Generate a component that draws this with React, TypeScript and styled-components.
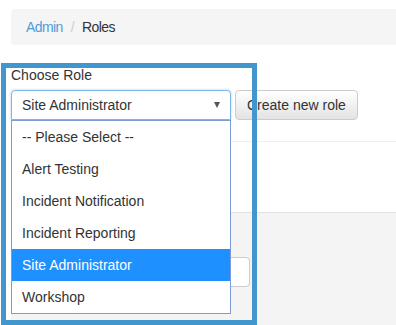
import React from 'react';
import styled, { createGlobalStyle } from 'styled-components';

const GlobalStyle = createGlobalStyle`
  html, body {
    margin: 0;
    padding: 0;
    background: #ffffff;
  }
  body {
    font-family: "Liberation Sans", Arial, Helvetica, sans-serif;
    font-size: 14px;
    line-height: 20px;
    color: #333333;
  }
`;

const Page = styled.div`
  position: relative;
  width: 396px;
  height: 325px;
  overflow: hidden;
  padding: 9px 0 0 11px;
  box-sizing: border-box;
`;

const Breadcrumb = styled.ol`
  display: flex;
  align-items: center;
  list-style: none;
  margin: 0 0 20px 0;
  padding: 8px 15px;
  height: 36px;
  box-sizing: border-box;
  background: #f5f5f5;
  border-radius: 4px 0 0 4px;
  letter-spacing: -0.6px;

  li + li::before {
    content: '/';
    color: #cccccc;
    padding: 0 8px 0 8px;
  }
`;

const Crumb = styled.li<{ $active?: boolean }>`
  color: ${(p) => (p.$active ? '#333333' : '#4f9bd9')};
`;

const FormBlock = styled.div`
  position: relative;
`;

const Label = styled.label`
  display: block;
  margin-bottom: 5px;
  color: #333333;
`;

const Row = styled.div`
  display: flex;
  gap: 4px;
`;

const SelectBox = styled.div`
  position: relative;
  width: 220px;
  height: 30px;
  box-sizing: border-box;
  padding: 5px 10px;
  border: 1px solid #7fb4e6;
  border-radius: 4px 4px 0 0;
  box-shadow: 0 0 3px rgba(102, 175, 233, 0.5);
  background: #fff;
  display: flex;
  align-items: center;
  justify-content: space-between;
`;

const Caret = styled.span`
  width: 0;
  height: 0;
  border-left: 3.5px solid transparent;
  border-right: 3.5px solid transparent;
  border-top: 6px solid #555555;
`;

const Button = styled.button`
  height: 30px;
  padding: 0 11px;
  font: inherit;
  color: #333333;
  border: 1px solid #cccccc;
  border-radius: 4px;
  background: linear-gradient(#ffffff, #e3e3e3);
`;

const OptionList = styled.ul`
  position: absolute;
  left: 0;
  top: 55px;
  z-index: 2;
  width: 220px;
  box-sizing: border-box;
  margin: 0;
  padding: 0;
  list-style: none;
  background: #ffffff;
  border: 1px solid #7d9bd6;
`;

const Option = styled.li<{ $selected?: boolean }>`
  height: 32px;
  line-height: 32px;
  padding-left: 10px;
  background: ${(p) => (p.$selected ? '#1e90ff' : 'transparent')};
  color: ${(p) => (p.$selected ? '#ffffff' : '#333333')};
`;

const WhiteSection = styled.div`
  margin-top: 21px;
  height: 70px;
  border-top: 1px solid #eeeeee;
`;

const GraySection = styled.div`
  height: 200px;
  border-top: 1px solid #e2e2e2;
  background: #f4f4f4;
  padding: 44px 0 0 15px;
  box-sizing: border-box;
`;

const TextInput = styled.div`
  width: 224px;
  height: 30px;
  box-sizing: border-box;
  background: #ffffff;
  border: 1px solid #cccccc;
  border-radius: 4px;
`;

const HighlightFrame = styled.div`
  position: absolute;
  left: 1px;
  top: 63px;
  width: 256px;
  height: 262px;
  box-sizing: border-box;
  border: 5px solid #4096cd;
  pointer-events: none;
  z-index: 3;
`;

const roles = [
  '-- Please Select --',
  'Alert Testing',
  'Incident Notification',
  'Incident Reporting',
  'Site Administrator',
  'Workshop',
];

const App: React.FC = () => {
  const selected = 'Site Administrator';
  return (
    <>
      <GlobalStyle />
      <Page>
        <Breadcrumb>
          <Crumb>Admin</Crumb>
          <Crumb $active>Roles</Crumb>
        </Breadcrumb>
        <FormBlock>
          <Label>Choose Role</Label>
          <Row>
            <SelectBox>
              <span>{selected}</span>
              <Caret />
            </SelectBox>
            <Button>Create new role</Button>
          </Row>
          <OptionList>
            {roles.map((r) => (
              <Option key={r} $selected={r === selected}>
                {r}
              </Option>
            ))}
          </OptionList>
        </FormBlock>
        <WhiteSection />
        <GraySection>
          <TextInput />
        </GraySection>
        <HighlightFrame />
      </Page>
    </>
  );
};

export default App;
